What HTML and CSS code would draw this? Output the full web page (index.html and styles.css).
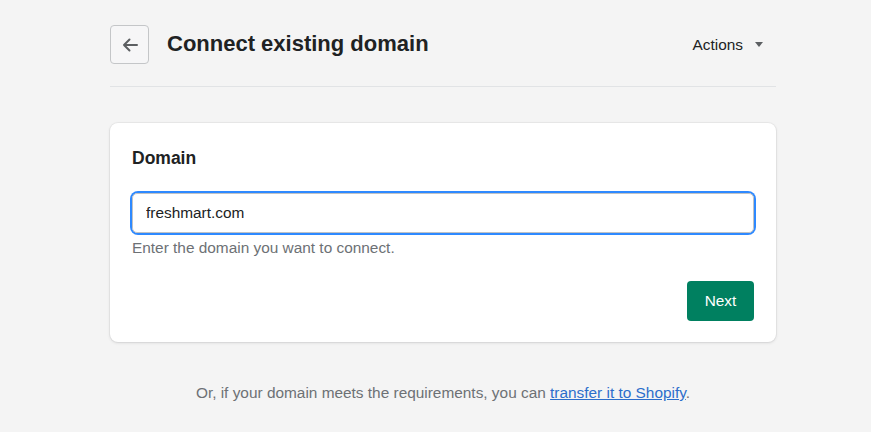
FILE: index.html
```html
<!DOCTYPE html>
<html lang="en">
<head>
<meta charset="utf-8">
<title>Connect existing domain</title>
<link rel="stylesheet" href="styles.css">
</head>
<body>
<div class="page">
  <header class="header">
    <button class="back" aria-label="Back">
      <svg width="20" height="20" viewBox="0 0 20 20"><path d="M17 10H4M9.5 4.5L4 10l5.5 5.5" fill="none" stroke="#5c5f62" stroke-width="2" stroke-linecap="round" stroke-linejoin="round"/></svg>
    </button>
    <h1 class="title">Connect existing domain</h1>
    <button class="actions">Actions <span class="caret"></span></button>
  </header>
  <section class="card">
    <h2 class="card-title">Domain</h2>
    <div class="field">
      <input class="input" type="text" value="freshmart.com">
    </div>
    <p class="hint">Enter the domain you want to connect.</p>
    <div class="card-footer">
      <button class="primary">Next</button>
    </div>
  </section>
  <p class="footnote">Or, if your domain meets the requirements, you can <a href="#" class="link">transfer it to Shopify</a>.</p>
</div>
</body>
</html>
```
FILE: styles.css
```css
* { box-sizing: border-box; }
html, body { margin: 0; padding: 0; }
body {
  background: #f4f4f4;
  font-family: "Liberation Sans", Arial, sans-serif;
  color: #202223;
  font-size: 15.4px;
}
.page {
  margin: 0 95px 0 110px;
  padding-top: 25px;
}
.header {
  display: flex;
  align-items: center;
  padding-bottom: 22px;
  border-bottom: 1px solid #e1e3e5;
}
.back {
  width: 39px;
  height: 39px;
  border: 1px solid #c4c6c8;
  border-radius: 4px;
  background: #f6f6f7;
  display: flex;
  align-items: center;
  justify-content: center;
  padding: 0;
  margin-right: 18px;
}
.title {
  margin: 0 0 2px;
  font-size: 22px;
  font-weight: 700;
  flex: 1;
}
.actions {
  background: none;
  border: none;
  font: inherit;
  font-size: 15.4px;
  color: #202223;
  display: flex;
  align-items: center;
  padding: 0;
  margin-right: 13px;
}
.caret {
  display: inline-block;
  width: 0; height: 0;
  border-left: 4px solid transparent;
  border-right: 4px solid transparent;
  border-top: 5px solid #5c5f62;
  margin-left: 12px;
}
.card {
  margin-top: 36px;
  background: #fff;
  border-radius: 8px;
  box-shadow: 0 0 0 1px rgba(63,63,68,0.05), 0 1px 3px rgba(63,63,68,0.15);
  padding: 25px 22px 21px;
}
.card-title {
  margin: 0 0 25px;
  font-size: 17.5px;
  font-weight: 700;
  line-height: 20px;
}
.field {
  border-radius: 6px;
  box-shadow: 0 0 0 2px #2e89ff;
}
.input {
  display: block;
  width: 100%;
  height: 40px;
  border: 1px solid #c0c2c4;
  border-radius: 5px;
  padding: 0 13px;
  font: inherit;
  color: #202223;
  outline: none;
  background: #fff;
}
.hint {
  margin: 5px 0 0;
  color: #6d7175;
  line-height: 20px;
}
.card-footer {
  display: flex;
  justify-content: flex-end;
  margin-top: 23px;
}
.primary {
  width: 67px;
  height: 40px;
  border: none;
  border-radius: 4px;
  background: #008060;
  color: #fff;
  font: inherit;
}
.footnote {
  margin: 41px 0 0;
  text-align: center;
  color: #6d7175;
  line-height: 20px;
}
.link { color: #2c6ecb; }
```
